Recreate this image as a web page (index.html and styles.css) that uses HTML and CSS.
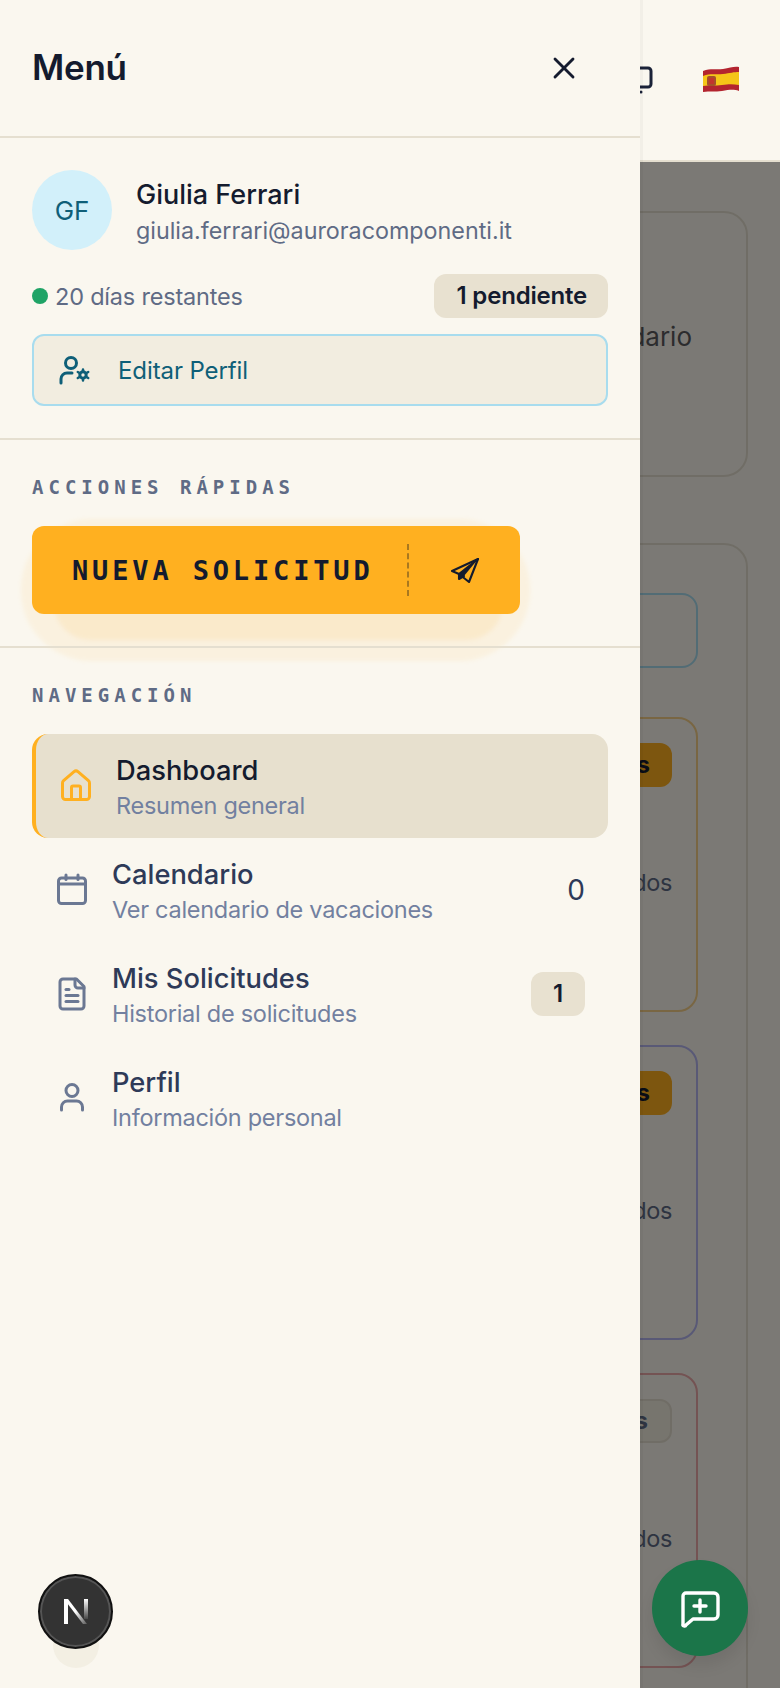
FILE: index.html
```html
<!DOCTYPE html>
<html lang="es">

<head>
    <meta charset="UTF-8">
    <meta name="viewport" content="width=device-width, initial-scale=1.0">
    <title>Menú</title>
    <link rel="stylesheet" href="styles.css">
</head>

<body>
    <div class="app">
        <header class="topbar">
            <svg class="topbar-icon" viewBox="0 0 36 36" fill="none" stroke="#1a2238" stroke-width="3" stroke-linecap="round" stroke-linejoin="round">
                <rect x="7" y="2" width="27" height="19" rx="3"></rect>
                <path d="M24 26v0"></path>
            </svg>
            <svg class="flag" viewBox="0 0 36 26">
                <path d="M0 5C8 2 12 4 20 3 27 2 31 0 36 1v24c-6-2-10-1-17 0-7 1-12 0-19 1z" fill="#b3242f"></path>
                <path d="M0 10c8-3 12-1 20-2 7-1 11-2 16-2v13c-6-1-10-1-17 0-7 1-12 0-19 1z" fill="#f5c518"></path>
                <rect x="4" y="10" width="9" height="10" rx="2" fill="#a5502a"></rect>
                <rect x="6" y="12" width="5" height="6" fill="#c2352d"></rect>
            </svg>
        </header>

        <main class="content">
            <section class="card card-top">
                <p class="card-text">Calendario</p>
            </section>
            <section class="card card-list">
                <div class="box-search"></div>
                <div class="box box-orange">
                    <span class="box-badge">Disponibles</span>
                    <p class="box-text">Usados</p>
                </div>
                <div class="box box-purple">
                    <span class="box-badge">Disponibles</span>
                    <p class="box-text">Usados</p>
                </div>
                <div class="box box-red">
                    <span class="box-badge box-badge-muted">Disponibles</span>
                    <p class="box-text">Usados</p>
                </div>
            </section>
        </main>

        <div class="overlay"></div>

        <aside class="drawer">
            <div class="drawer-head">
                <h1>Menú</h1>
                <button class="close-btn">
                    <svg class="icon" viewBox="0 0 24 24" fill="none" stroke="#141b2e" stroke-width="1.900" stroke-linecap="round" stroke-linejoin="round">
                        <path d="M18 6 6 18"></path>
                        <path d="m6 6 12 12"></path>
                    </svg>
                </button>
            </div>

            <div class="section profile">
                <div class="profile-row">
                    <div class="avatar">GF</div>
                    <div class="profile-text">
                        <div class="profile-name">Giulia Ferrari</div>
                        <div class="profile-mail">giulia.ferrari@auroracomponenti.it</div>
                    </div>
                </div>
                <div class="status-row">
                    <div class="status">
                        <span class="dot"></span>
                        20 días restantes
                    </div>
                    <span class="pill">1 pendiente</span>
                </div>
                <a class="edit-btn">
                    <svg class="icon" viewBox="0 0 36 36" fill="none" stroke="#0f5f78" stroke-width="3" stroke-linecap="round" stroke-linejoin="round">
                        <circle cx="16" cy="11" r="5.5"></circle>
                        <path d="M6 31v-4a6 6 0 0 1 6-6h5"></path>
                        <circle cx="28" cy="23" r="3.2"></circle>
                        <path d="M28 17.500v2M28 26.500v2M22.800 20l1.700 1M31.500 25l1.700 1M22.800 26l1.700-1M31.500 21l1.700-1" stroke-width="2.500"></path>
                    </svg>
                    Editar Perfil
                </a>
            </div>

            <div class="section quick">
                <h2 class="section-title">ACCIONES RÁPIDAS</h2>
                <button class="new-btn">
                    <span class="new-label">NUEVA SOLICITUD</span>
                    <span class="new-sep"></span>
                    <svg class="icon" viewBox="0 0 36 36" fill="none" stroke="#141b2e" stroke-width="2.100" stroke-linejoin="round" stroke-linecap="round">
                        <path d="M30 7 4 19l7 3 10 8z"></path>
                        <path d="M30 7 11 22v5l5-3" fill="#141b2e"></path>
                    </svg>
                </button>
            </div>

            <nav class="nav">
                <h2 class="section-title">NAVEGACIÓN</h2>
                <a class="nav-item active">
                    <svg class="icon" viewBox="0 0 24 24" fill="none" stroke="#ffb020" stroke-width="2" stroke-linecap="round" stroke-linejoin="round">
                        <path d="M15 21v-8a1 1 0 0 0-1-1h-4a1 1 0 0 0-1 1v8"></path>
                        <path d="M3 10a2 2 0 0 1 .709-1.528l7-5.999a2 2 0 0 1 2.582 0l7 5.999A2 2 0 0 1 21 10v9a2 2 0 0 1-2 2H5a2 2 0 0 1-2-2z"></path>
                    </svg>
                    <span class="nav-text">
                        <span class="nav-title">Dashboard</span>
                        <span class="nav-sub">Resumen general</span>
                    </span>
                </a>
                <a class="nav-item">
                    <svg class="icon" viewBox="0 0 24 24" fill="none" stroke="#6b7893" stroke-width="2" stroke-linecap="round" stroke-linejoin="round">
                        <rect x="3" y="4" width="18" height="17" rx="2"></rect>
                        <path d="M8 2v3"></path>
                        <path d="M16 2v3"></path>
                        <path d="M3 8h18"></path>
                    </svg>
                    <span class="nav-text">
                        <span class="nav-title">Calendario</span>
                        <span class="nav-sub">Ver calendario de vacaciones</span>
                    </span>
                    <span class="nav-count">0</span>
                </a>
                <a class="nav-item">
                    <svg class="icon" viewBox="0 0 24 24" fill="none" stroke="#6b7893" stroke-width="2" stroke-linecap="round" stroke-linejoin="round">
                        <path d="M15 2H6a2 2 0 0 0-2 2v16a2 2 0 0 0 2 2h12a2 2 0 0 0 2-2V7z"></path>
                        <path d="M14 2v4a2 2 0 0 0 2 2h4"></path>
                        <path d="M10 9H8"></path>
                        <path d="M16 13H8"></path>
                        <path d="M16 17H8"></path>
                    </svg>
                    <span class="nav-text">
                        <span class="nav-title">Mis Solicitudes</span>
                        <span class="nav-sub">Historial de solicitudes</span>
                    </span>
                    <span class="nav-badge">1</span>
                </a>
                <a class="nav-item">
                    <svg class="icon" viewBox="0 0 24 24" fill="none" stroke="#6b7893" stroke-width="2" stroke-linecap="round" stroke-linejoin="round">
                        <path d="M19 21v-2a4 4 0 0 0-4-4H9a4 4 0 0 0-4 4v2" transform="translate(0 -1)"></path>
                        <circle cx="12" cy="7" r="4"></circle>
                    </svg>
                    <span class="nav-text">
                        <span class="nav-title">Perfil</span>
                        <span class="nav-sub">Información personal</span>
                    </span>
                </a>
            </nav>
        </aside>

        <div class="dev-shadow"></div>
        <div class="dev-badge">
            <svg viewBox="0 0 36 36" width="36" height="36" fill="none">
                <defs>
                    <linearGradient id="nDiag" x1="0" y1="0" x2="1" y2="1">
                        <stop offset="0.5" stop-color="#fff"></stop>
                        <stop offset="1" stop-color="#fff" stop-opacity="0.2"></stop>
                    </linearGradient>
                    <linearGradient id="nBar" x1="0" y1="0" x2="0" y2="1">
                        <stop offset="0" stop-color="#fff"></stop>
                        <stop offset="1" stop-color="#fff" stop-opacity="0.1"></stop>
                    </linearGradient>
                </defs>
                <rect x="6" y="5" width="4" height="25" fill="#fff"></rect>
                <path d="M6 5h4l19 25h-4z" fill="url(#nDiag)"></path>
                <rect x="26" y="5" width="4" height="20" fill="url(#nBar)"></rect>
            </svg>
        </div>

        <button class="fab">
            <svg viewBox="0 0 48 48" width="48" height="48" fill="none" stroke="#fff" stroke-width="3.400" stroke-linecap="round" stroke-linejoin="round">
                <path d="M10 9h28a4 4 0 0 1 4 4v18a4 4 0 0 1-4 4H17l-7 6a1 1 0 0 1-3-1V12a3 3 0 0 1 3-3z"></path>
                <path d="M24 16v12"></path>
                <path d="M18 22h12"></path>
            </svg>
        </button>
    </div>
</body>

</html>
```

FILE: styles.css
```css
* {
    box-sizing: border-box;
}

body {
    margin: 0;
    font-family: Inter, "Noto Sans", sans-serif;
    background-color: #faf7ef;
    color: #141b2e;
}

h1,
h2,
p {
    margin: 0;
}

button {
    font-family: inherit;
    border: none;
    background: none;
    padding: 0;
}

.app {
    position: relative;
    height: 100vh;
    overflow: hidden;
}

.icon {
    width: 36px;
    height: 36px;
    flex-shrink: 0;
}

/* page behind the drawer */
.topbar {
    position: relative;
    z-index: 2;
    height: 162px;
    display: flex;
    justify-content: flex-end;
    align-items: flex-start;
    gap: 50px;
    padding: 66px 41px 0 0;
    background-color: #faf7ef;
    border-bottom: 2px solid #e5dfd0;
}

.topbar-icon {
    width: 36px;
    height: 36px;
}

.flag {
    width: 36px;
    height: 26px;
}

.content {
    padding: 49px 32px 0;
}

.card {
    border: 2px solid #e5dfd0;
    border-radius: 24px;
}

.card-top {
    height: 266px;
    display: flex;
    justify-content: flex-end;
    padding: 106px 54px 0 0;
}

.card-text {
    font-size: 26px;
    line-height: 36px;
    color: #5a5a5e;
}

.card-list {
    margin-top: 66px;
    padding: 48px 48px 60px 0;
    display: flex;
    flex-direction: column;
    gap: 33px;
    align-items: flex-end;
}

.box-search {
    width: 560px;
    height: 75px;
    margin-bottom: 16px;
    border: 2px solid #a8dcee;
    border-radius: 16px;
}

.box {
    width: 560px;
    height: 295px;
    display: flex;
    flex-direction: column;
    align-items: flex-end;
    padding: 24px 24px 0 0;
    border: 2px solid;
    border-radius: 20px;
}

.box-orange {
    border-color: #f6d089;
}

.box-purple {
    border-color: #b5b5f0;
}

.box-red {
    border-color: #eca9a9;
}

.box-badge {
    height: 44px;
    padding: 0 22px;
    font-size: 24px;
    line-height: 44px;
    font-weight: 700;
    color: #141b2e;
    background-color: #ffb020;
    border-radius: 12px;
}

.box-badge-muted {
    line-height: 40px;
    color: #5f6b85;
    background-color: #f3eee1;
    border: 2px solid #e5dfd0;
}

.box-text {
    margin-top: 79px;
    font-size: 23.500px;
    line-height: 34px;
    letter-spacing: -0.350px;
    color: #5f6b85;
}

.overlay {
    position: absolute;
    inset: 162px 0 0;
    z-index: 1;
    background-color: rgba(0, 0, 0, 0.51);
}

/* drawer */
.drawer {
    position: absolute;
    top: 0;
    left: 0;
    bottom: 0;
    z-index: 3;
    width: 640px;
    background-color: #faf7ef;
    box-shadow: 3px 0 0 rgba(0, 0, 0, 0.03);
}

.drawer-head {
    height: 138px;
    display: flex;
    justify-content: space-between;
    align-items: center;
    padding: 0 58px 0 32px;
    border-bottom: 2px solid #e5dfd0;
}

.drawer-head h1 {
    margin-bottom: 2px;
    font-size: 35px;
    line-height: 44px;
    font-weight: 600;
    letter-spacing: -0.300px;
}

.close-btn {
    display: flex;
    cursor: pointer;
}

.section {
    padding: 32px;
    border-bottom: 2px solid #e5dfd0;
}

.profile-row {
    display: flex;
    align-items: center;
    gap: 24px;
}

.avatar {
    width: 80px;
    height: 80px;
    display: flex;
    justify-content: center;
    align-items: center;
    border-radius: 50%;
    background-color: #d2f0fa;
    color: #0f5f78;
    font-size: 26px;
}

.profile-name {
    margin-top: 4px;
    font-size: 27px;
    line-height: 36px;
    font-weight: 500;
}

.profile-mail {
    margin-top: 1px;
    font-size: 23.300px;
    line-height: 34px;
    color: #5f6b85;
}

.status-row {
    display: flex;
    justify-content: space-between;
    align-items: center;
    margin-top: 24px;
}

.status {
    display: flex;
    align-items: center;
    gap: 7px;
    font-size: 23.500px;
    letter-spacing: -0.200px;
    color: #5f6b85;
}

.dot {
    width: 16px;
    height: 16px;
    border-radius: 50%;
    background-color: #1fa366;
}

.pill {
    height: 44px;
    padding: 0 21px 0 23px;
    font-size: 24px;
    line-height: 44px;
    font-weight: 600;
    letter-spacing: -0.200px;
    background-color: #e8e1d0;
    border-radius: 12px;
}

.edit-btn {
    height: 72px;
    display: flex;
    align-items: center;
    gap: 27px;
    margin-top: 16px;
    padding-left: 21px;
    font-size: 24px;
    letter-spacing: -0.100px;
    color: #0f5f78;
    background-color: #f2ede0;
    border: 2px solid #a8dcee;
    border-radius: 12px;
}

.section-title {
    font-family: "DejaVu Sans Mono", monospace;
    font-size: 19px;
    line-height: 30px;
    font-weight: 700;
    letter-spacing: 5px;
    color: #5f6b85;
}

.new-btn {
    position: relative;
    width: 488px;
    height: 88px;
    display: flex;
    align-items: center;
    margin-top: 24px;
    padding-left: 40px;
    background-color: #ffb020;
    border-radius: 12px;
    cursor: pointer;
}

/* soft orange glow round the button, wider below it */
.new-btn::before {
    content: "";
    position: absolute;
    inset: -7px -10px -47px -11px;
    z-index: -1;
    border-radius: 80px;
    background-color: rgba(255, 176, 32, 0.08);
    filter: blur(2px);
}

.new-btn::after {
    content: "";
    position: absolute;
    inset: 40px 17px -26px 22px;
    z-index: -1;
    border-radius: 50px;
    background-color: rgba(255, 176, 32, 0.1);
    filter: blur(2px);
}

.new-label {
    width: 335px;
    text-align: left;
    font-family: "DejaVu Sans Mono", monospace;
    font-size: 27px;
    font-weight: 700;
    letter-spacing: 3.850px;
    color: #141b2e;
}

.new-sep {
    height: 52px;
    border-left: 2px dashed #a9781f;
    margin-right: 39px;
}

.nav {
    padding: 32px 32px 0;
}

.nav .section-title {
    margin-bottom: 24px;
}

.nav-item {
    height: 104px;
    display: flex;
    align-items: center;
    gap: 22px;
    padding: 0 23px 0 22px;
    border-radius: 16px;
}

.nav-item.active {
    border-left: 4px solid #ffb020;
    background-color: #e7e0ce;
}

.nav-text {
    display: flex;
    flex-direction: column;
    flex: 1;
    padding-top: 3px;
}

.nav-title {
    font-size: 27.300px;
    line-height: 36px;
    font-weight: 500;
    color: #2e3a58;
}

.active .nav-title {
    color: #141b2e;
}

.nav-sub {
    font-size: 23.500px;
    line-height: 33px;
    letter-spacing: -0.270px;
    color: #7280a0;
}

.nav-count {
    font-size: 28px;
    color: #2e3a58;
}

.nav-badge {
    width: 54px;
    height: 44px;
    text-align: center;
    font-size: 24px;
    line-height: 44px;
    font-weight: 600;
    background-color: #e8e1d0;
    border-radius: 12px;
}

/* floating things */
.dev-shadow {
    position: absolute;
    left: 53px;
    top: 1622px;
    z-index: 4;
    width: 46px;
    height: 46px;
    border-radius: 50%;
    background-color: #f3efe3;
}

.dev-badge {
    position: absolute;
    left: 38px;
    top: 1574px;
    z-index: 5;
    width: 75px;
    height: 75px;
    display: flex;
    justify-content: center;
    align-items: center;
    border-radius: 50%;
    background-color: #333;
    border: 2px solid #111;
    box-shadow: inset 0 0 0 2px #555;
}

.fab {
    position: absolute;
    left: 652px;
    top: 1560px;
    z-index: 5;
    width: 96px;
    height: 96px;
    display: flex;
    justify-content: center;
    align-items: center;
    border-radius: 50%;
    background-color: #1b7549;
    box-shadow: 0 10px 15px rgba(0, 0, 0, 0.08);
}
```
